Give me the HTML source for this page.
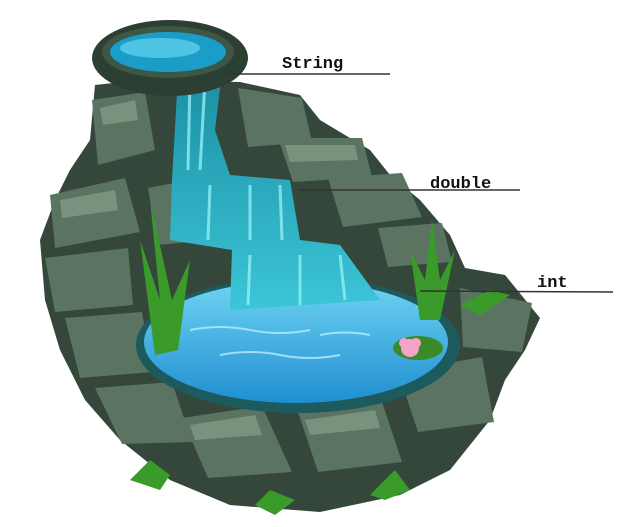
<!DOCTYPE html>
<html><head><meta charset="utf-8"><style>
html,body{margin:0;padding:0;background:#fff;width:629px;height:527px;overflow:hidden}
svg{display:block}
text{font-family:"Liberation Mono",monospace;font-weight:bold;font-size:17px;fill:#111}
</style></head><body>
<svg width="629" height="527" viewBox="0 0 629 527">
<defs>
<linearGradient id="pond" x1="0" y1="0" x2="0" y2="1"><stop offset="0" stop-color="#6fd3f2"/><stop offset="1" stop-color="#1f8fd0"/></linearGradient>
<linearGradient id="fall" x1="0" y1="0" x2="0" y2="1"><stop offset="0" stop-color="#1c8fa3"/><stop offset="1" stop-color="#3cc5d8"/></linearGradient>
</defs>
<path d="M95,85 L140,80 L240,82 L300,95 L320,120 L370,150 L390,175 L420,200 L450,235 L465,268 L505,275 L540,318 L525,350 L505,380 L490,420 L450,470 L400,495 L320,512 L230,505 L170,480 L120,440 L85,400 L60,350 L45,300 L40,240 L55,200 L70,170 L90,140 Z" fill="#34473a"/>
<g fill="#5a7461">
<path d="M92,100 L145,92 L155,150 L98,165 Z"/>
<path d="M50,195 L125,178 L140,232 L55,248 Z"/>
<path d="M45,258 L128,248 L133,305 L55,312 Z"/>
<path d="M65,318 L142,312 L152,372 L80,378 Z"/>
<path d="M95,388 L172,382 L192,442 L122,444 Z"/>
<path d="M182,418 L262,406 L292,472 L208,478 Z"/>
<path d="M298,412 L382,402 L402,462 L318,472 Z"/>
<path d="M398,372 L482,357 L494,422 L418,432 Z"/>
<path d="M460,288 L532,303 L522,352 L463,347 Z"/>
<path d="M238,88 L302,98 L312,142 L248,147 Z"/>
<path d="M278,138 L362,138 L372,177 L293,182 Z"/>
<path d="M328,178 L402,173 L422,217 L343,227 Z"/>
<path d="M378,228 L442,223 L452,262 L388,267 Z"/>
<path d="M148,188 L200,178 L210,240 L158,245 Z"/>
</g>
<g fill="#84a08a" opacity="0.7">
<path d="M100,108 L135,100 L138,120 L103,125 Z"/>
<path d="M60,200 L115,190 L118,210 L62,218 Z"/>
<path d="M190,425 L255,415 L262,435 L195,440 Z"/>
<path d="M305,420 L375,410 L380,428 L310,435 Z"/>
<path d="M285,145 L355,145 L358,160 L290,162 Z"/>
</g>
<ellipse cx="298" cy="345" rx="162" ry="68" fill="#1d5a5e"/>
<ellipse cx="296" cy="342" rx="152" ry="61" fill="url(#pond)"/>
<g stroke="#b8ecfb" stroke-width="2" fill="none" opacity="0.8">
<path d="M190,330 q30,-6 60,0 t60,0"/><path d="M220,355 q30,-6 60,0 t60,0"/><path d="M320,335 q25,-5 50,0"/>
</g>
<path d="M178,75 L222,72 L215,130 L230,175 L290,180 L300,240 L340,245 L380,300 L230,310 L232,250 L170,240 L172,180 Z" fill="url(#fall)"/>
<g stroke="#8ef0f5" stroke-width="3" fill="none" opacity="0.8">
<path d="M190,80 L188,170"/><path d="M205,80 L200,170"/><path d="M210,185 L208,240"/><path d="M250,185 L250,240"/><path d="M280,185 L282,240"/><path d="M250,255 L248,305"/><path d="M300,255 L300,305"/><path d="M340,255 L345,300"/>
</g>
<ellipse cx="170" cy="58" rx="78" ry="38" fill="#2c3f33"/>
<ellipse cx="168" cy="52" rx="66" ry="26" fill="#3d5646"/>
<ellipse cx="168" cy="52" rx="58" ry="20" fill="#1a9ec8"/>
<ellipse cx="160" cy="48" rx="40" ry="10" fill="#4fc4e4"/>
<g fill="#3a9a2a">
<path d="M155,355 L140,240 L160,300 L150,200 L172,300 L190,260 L178,350 Z"/>
<path d="M420,320 L410,250 L425,280 L432,220 L440,280 L455,250 L440,320 Z"/>
<path d="M460,305 L490,290 L510,295 L480,315 Z"/>
<path d="M130,480 L150,460 L170,475 L160,490 Z"/>
<path d="M255,505 L270,490 L295,500 L275,515 Z"/>
<path d="M370,495 L395,470 L410,490 L385,500 Z"/>
</g>
<ellipse cx="418" cy="348" rx="25" ry="12" fill="#3a8a2a"/>
<g fill="#f4a4c8"><circle cx="410" cy="348" r="9"/><circle cx="404" cy="343" r="5"/><circle cx="416" cy="343" r="5"/></g>
<text x="282" y="68">String</text>
<line x1="225" y1="74" x2="390" y2="74" stroke="#333" stroke-width="1.5"/>
<text x="430" y="188">double</text>
<line x1="300" y1="190" x2="520" y2="190" stroke="#333" stroke-width="1.5"/>
<text x="537" y="287">int</text>
<line x1="420" y1="291" x2="613" y2="292" stroke="#333" stroke-width="1.5"/>
</svg>
</body></html>
